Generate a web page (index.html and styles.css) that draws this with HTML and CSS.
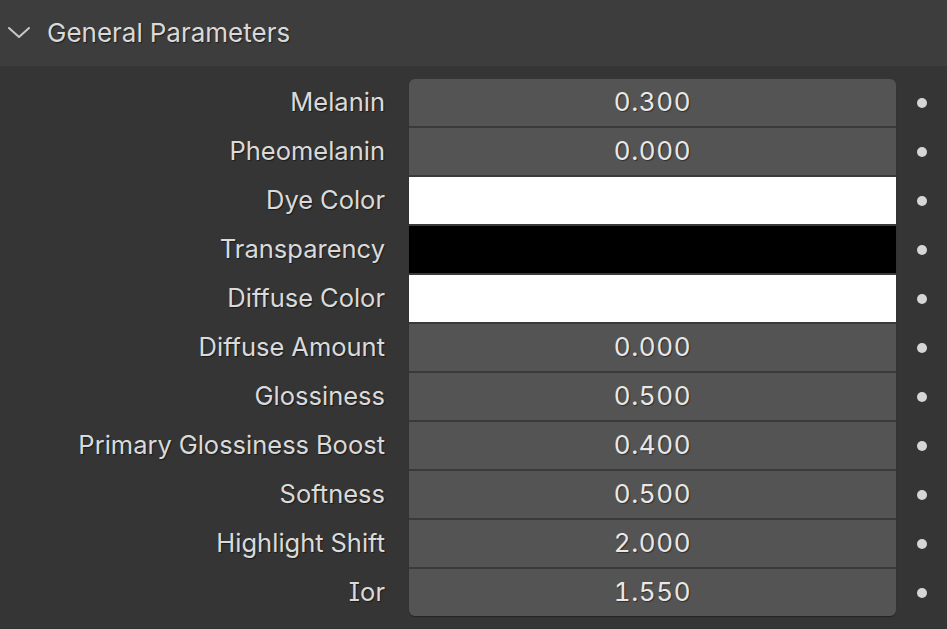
FILE: index.html
```html
<!DOCTYPE html>
<html>
<head>
<meta charset="utf-8">
<link rel="stylesheet" href="styles.css">
</head>
<body>
<div class="panel">
  <div class="header">
    <svg class="chevron" width="24" height="14" viewBox="0 0 24 14"><path d="M2 2 L12 11 L22 2" fill="none" stroke="#c8c8c8" stroke-width="2" stroke-linecap="round" stroke-linejoin="round"/></svg>
    <span class="title">General Parameters</span>
  </div>
  <div class="body">
    <div class="labels">
      <div class="label">Melanin</div>
      <div class="label">Pheomelanin</div>
      <div class="label">Dye Color</div>
      <div class="label">Transparency</div>
      <div class="label">Diffuse Color</div>
      <div class="label">Diffuse Amount</div>
      <div class="label">Glossiness</div>
      <div class="label">Primary Glossiness Boost</div>
      <div class="label">Softness</div>
      <div class="label">Highlight Shift</div>
      <div class="label">Ior</div>
    </div>
    <div class="fields">
      <div class="field">0.300</div>
      <div class="field">0.000</div>
      <div class="field white"></div>
      <div class="field black"></div>
      <div class="field white"></div>
      <div class="field">0.000</div>
      <div class="field">0.500</div>
      <div class="field">0.400</div>
      <div class="field">0.500</div>
      <div class="field">2.000</div>
      <div class="field">1.550</div>
    </div>
    <div class="dots">
      <div class="dotrow"><span class="dot"></span></div>
      <div class="dotrow"><span class="dot"></span></div>
      <div class="dotrow"><span class="dot"></span></div>
      <div class="dotrow"><span class="dot"></span></div>
      <div class="dotrow"><span class="dot"></span></div>
      <div class="dotrow"><span class="dot"></span></div>
      <div class="dotrow"><span class="dot"></span></div>
      <div class="dotrow"><span class="dot"></span></div>
      <div class="dotrow"><span class="dot"></span></div>
      <div class="dotrow"><span class="dot"></span></div>
      <div class="dotrow"><span class="dot"></span></div>
    </div>
  </div>
</div>
</body>
</html>
```
FILE: styles.css
```css
* { box-sizing: border-box; }
html, body { margin: 0; padding: 0; }
body {
  width: 947px;
  height: 629px;
  background: #353535;
  font-family: Inter, "Noto Sans", sans-serif;
  font-feature-settings: "cv08", "tnum";
  overflow: hidden;
}
.panel { width: 947px; }
.header {
  height: 66px;
  background: #3d3d3d;
  display: flex;
  align-items: center;
  padding-left: 7px;
}
.title {
  margin-left: 16px;
  font-size: 26px;
  color: #d9d9d9;
  text-shadow: 1px 1px 1px rgba(0,0,0,0.5);
  padding-bottom: 1px;
}
.body {
  display: flex;
  padding-top: 13px;
}
.labels {
  width: 385px;
  display: flex;
  flex-direction: column;
  gap: 2px;
}
.label {
  height: 47px;
  display: flex;
  align-items: center;
  justify-content: flex-end;
  padding-bottom: 2px;
  font-size: 25.5px;
  color: #dadada;
  text-shadow: 1px 1px 1px rgba(0,0,0,0.5);
}
.fields {
  margin-left: 24px;
  width: 487px;
  display: flex;
  flex-direction: column;
  gap: 2px;
  background: #3a3a3a;
  border-radius: 6px;
  box-shadow: 0 1px 1px rgba(0,0,0,0.35);
  overflow: hidden;
}
.field {
  height: 47px;
  background: #545454;
  display: flex;
  align-items: center;
  justify-content: center;
  padding-bottom: 2px;
  font-size: 26px;
  letter-spacing: 0.6px;
  color: #e8e8e8;
  text-shadow: 1px 1px 1px rgba(0,0,0,0.45);
}
.field.white { background: #ffffff; }
.field.black { background: #000000; }
.dots {
  width: 51px;
  display: flex;
  flex-direction: column;
  gap: 2px;
}
.dotrow {
  height: 47px;
  display: flex;
  align-items: center;
  justify-content: center;
}
.dot {
  width: 10px;
  height: 10px;
  border-radius: 50%;
  background: #d6d6d6;
}
```
